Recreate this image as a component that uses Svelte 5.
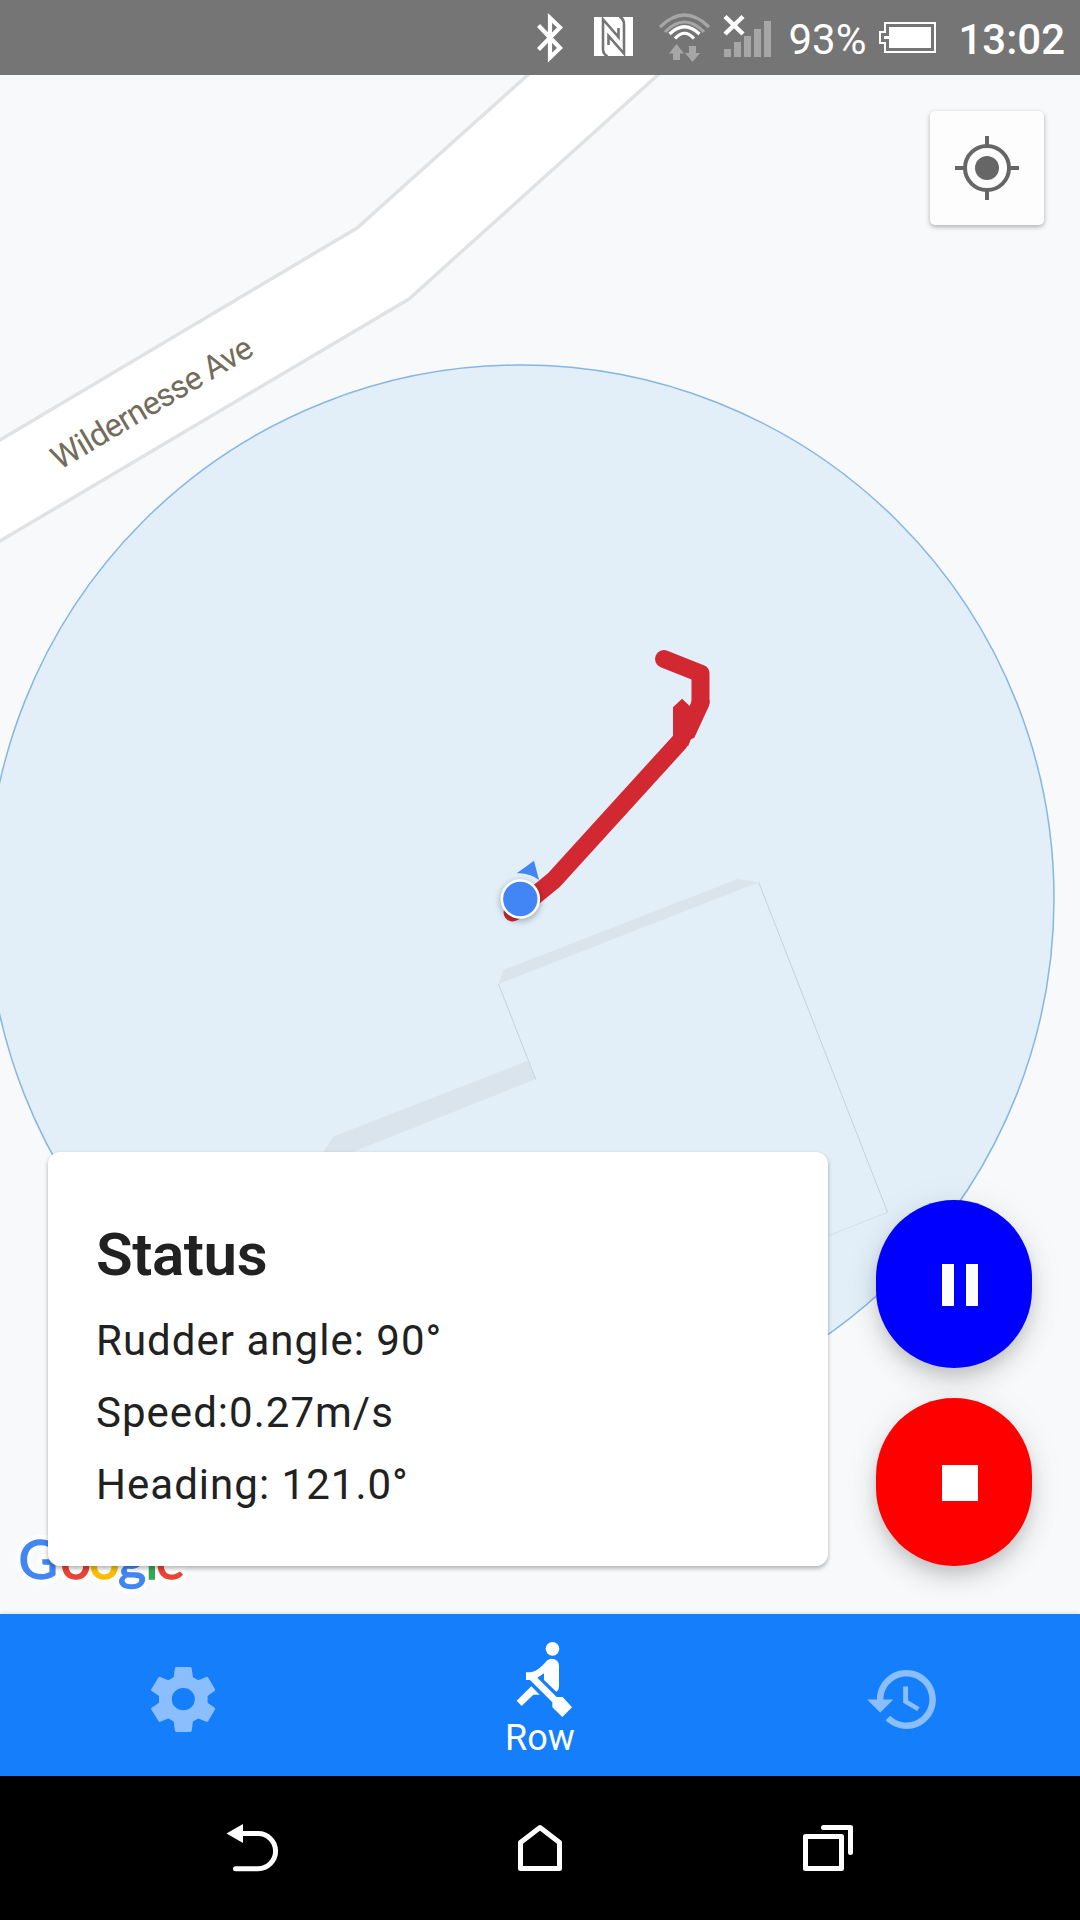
<script>
  const readings = ['Rudder angle: 90°', 'Speed:0.27m/s', 'Heading: 121.0°'];
  const logo = [
    ['G', 18.5, '#4285f4'],
    ['o', 60.5, '#ea4335'],
    ['o', 89, '#fbbc05'],
    ['g', 118, '#4285f4'],
    ['l', 145.5, '#34a853'],
    ['e', 156, '#ea4335']
  ];
</script>

<div class="screen">
  <header class="status-bar">
    <svg class="signals" viewBox="530 0 245 75" aria-hidden="true">
      <path class="line bt" d="M538.500 25.500 L560 48 L550 57.500 V18 L560 27.500 L538.500 49.500" />
      <path class="solid" d="M594 17 H633 V56 H594Z" />
      <path class="nfc" d="M607.500 56.500 Q603 54 603 49 V19.500 L618.500 37 V28 M619.500 16.500 Q624 19 624 24 V53.500 L608.500 36 V45" />
      <path class="line dim arc" d="M660 27 Q684.500 3 709 27 M665 32 Q684.500 12 704 32" />
      <path class="line arc" d="M669.500 34 Q684.500 19.500 699.500 34 M675 38.500 Q684.500 28 694 38.500" />
      <path class="solid dimfill" d="M676.500 44 L684 53.500 H680 V60 H673 V53.500 H669Z M689 46 H696 V53 H700 L692.500 62 L685 53 H689Z" />
      <path class="line cross" d="M725 16.500 L743 34 M743 16.500 L725 34" />
      <path class="solid dimfill" d="M724 49h7v8h-7z M734 42h7v15h-7z M744 36h7v21h-7z M754 29h7v28h-7z M764 21h7v36h-7z" />
    </svg>
    <span class="percent">93%</span>
    <svg class="battery" viewBox="878 20 60 35" aria-hidden="true">
      <path d="M885 23 H935 V52 H885 V43 H880 V32 H885Z" />
      <path class="charge" d="M889 27 H931 V48 H889 V39 H884 V36 H889Z" />
    </svg>
    <span class="time">13:02</span>
  </header>

  <main class="map">
    <svg class="canvas" viewBox="0 75 1080 1539" aria-hidden="true">
      <path class="road" d="M540 64 L357 228 L-10 446 V547 L409 299 L670 64Z" />
      <text class="street" transform="translate(59.500 470.500) rotate(-30.700)" textLength="228">Wildernesse Ave</text>
      <circle class="accuracy" cx="520.500" cy="898.500" r="533.500" />
      <path class="wall" d="M498.500 984 L503.200 970 L737.700 879 L758.700 882.300Z" />
      <path class="wall" d="M527.400 1061 L535.700 1079.300 L345 1155 H321 L334 1136.300Z" />
      <path class="outline" d="M498.500 984 L535.700 1079.300 M758.700 882.300 L887.600 1212.300" />
      <path class="outline faint" d="M887.600 1212.300 L820 1239" />
      <path class="track" d="M664 659 L700.500 673.500 V703" />
      <path class="track" d="M679.500 742 L554 880 L521 907 L512.600 912.500" />
      <path class="spur" d="M673 707.300 L682 698.700 L689.700 706 L692 700 H709.500 V703 L708 708 L694.300 737.700 L691 739.300 L688.300 745.700 L680 748 L673 738Z" />
      <path class="bearing" d="M516.700 873.300 L534 860.700 L539 880 Q529 872.500 516.700 873.300Z" />
      <circle class="me-shadow" cx="520.300" cy="901" r="20" />
      <circle class="me" cx="520.300" cy="899" r="18.500" />
      <text class="logo halo" y="1578.500">{#each logo as [ch, x]}<tspan {x}>{ch}</tspan>{/each}</text>
      <text class="logo" y="1578.500">{#each logo as [ch, x, fill]}<tspan {x} {fill} stroke={fill}>{ch}</tspan>{/each}</text>
    </svg>

    <div class="overlay">
      <button class="locate" aria-label="My location">
        <svg viewBox="0 0 64 64">
          <circle cx="32" cy="32" r="22" />
          <path d="M32 0V9 M32 55V64 M0 32H9 M55 32H64" />
          <circle class="core" cx="32" cy="32" r="12" />
        </svg>
      </button>

      <div class="panel">
        <section class="card">
          <h2>Status</h2>
          {#each readings as line}
            <p>{line}</p>
          {/each}
        </section>
        <div class="actions">
          <button class="fab pause" aria-label="Pause">
            <svg viewBox="0 0 36 42"><path d="M0 0h12v42H0z M24 0h12v42H24z" /></svg>
          </button>
          <button class="fab stop" aria-label="Stop">
            <svg viewBox="0 0 36 42"><path d="M0 3h36v36H0z" /></svg>
          </button>
        </div>
      </div>
    </div>
  </main>

  <nav class="tabs">
    <div class="tab side">
      <svg class="gear" viewBox="90 167 200 200" aria-hidden="true">
        <path fill-rule="evenodd" d="M168 170 H212 L215 173 L219 201 L235 210 L261 199 L264 200 L286 238 L285 241 L263 257 V277 L285 293 L286 296 L264 334 L261 335 L235 325 L219 334 L215 362 L212 365 H168 L165 362 L161 334 L145 325 L119 335 L116 334 L93 296 L94 293 L117 277 V257 L94 241 L93 238 L116 200 L119 199 L145 210 L161 201 L165 173Z M190 233 A34.500 33.500 0 1 0 190 300 A34.500 33.500 0 1 0 190 233Z" />
      </svg>
    </div>
    <div class="tab active">
      <svg class="rower" viewBox="1185 90 180 240" aria-hidden="true">
        <circle cx="1297.500" cy="116.500" r="20.500" />
        <path d="M1218 187 H1233 Q1255 182 1275 158 Q1284 146 1296 146 Q1317 148 1317 168 V230 Q1317 239 1309 245 L1272 210 V190 L1252 203 L1310 261 H1328 L1356 292 L1327 321 L1297 292 V277 L1230 210 H1218Z" />
        <path d="M1234 229 L1259 254 H1240 L1205 288 L1190 272Z" />
      </svg>
      <span>Row</span>
    </div>
    <div class="tab side">
      <svg class="history" viewBox="1 3 21 18" aria-hidden="true">
        <path d="M13 3c-4.970 0-9 4.030-9 9H1l3.890 3.890.07.14L9 12H6c0-3.870 3.130-7 7-7s7 3.130 7 7-3.130 7-7 7c-1.930 0-3.680-.79-4.940-2.060l-1.420 1.420C8.270 19.990 10.510 21 13 21c4.970 0 9-4.030 9-9s-4.030-9-9-9zm-1 5v5l4.280 2.540.72-1.210-3.500-2.080V8H12z" />
      </svg>
    </div>
  </nav>

  <footer class="system-nav">
    <svg viewBox="224 1822 58 52" aria-hidden="true">
      <path class="tip" d="M226.500 1833.500 L243 1824 V1843Z" />
      <path d="M240 1833.500 H258 A17.600 17.600 0 0 1 258 1868.700 H235.500" />
    </svg>
    <svg viewBox="511 1822 58 52" aria-hidden="true">
      <path d="M520.500 1868.500 V1842.500 L540 1827.500 L559.500 1842.500 V1868.500Z" />
    </svg>
    <svg viewBox="799 1822 58 52" aria-hidden="true">
      <path d="M805.500 1836.500 H841.500 V1868.500 H805.500Z M823.500 1827.500 H850.500 V1852.500" />
    </svg>
  </footer>
</div>

<style>
  :global(body) {
    margin: 0;
  }
  .screen {
    width: 1080px;
    height: 1920px;
    display: flex;
    flex-direction: column;
    overflow: hidden;
    font-family: Roboto, 'Liberation Sans', sans-serif;
  }
  svg {
    display: block;
    flex: none;
  }
  button {
    border: 0;
    padding: 0;
    display: flex;
    align-items: center;
    justify-content: center;
  }

  .status-bar {
    height: 75px;
    flex: none;
    box-sizing: border-box;
    padding-right: 15px;
    background: #757575;
    color: #fff;
    display: flex;
    align-items: center;
    justify-content: flex-end;
    font-size: 42px;
    line-height: 75px;
  }
  .signals {
    width: 245px;
    height: 75px;
  }
  .solid {
    fill: #fff;
  }
  .line {
    fill: none;
    stroke: #fff;
    stroke-width: 4;
  }
  .nfc {
    fill: none;
    stroke: #757575;
    stroke-width: 2.6;
  }
  .bt {
    stroke-width: 4.2;
    stroke-miterlimit: 10;
  }
  .arc {
    stroke-width: 3.2;
  }
  .cross {
    stroke-width: 4.5;
  }
  .dim {
    stroke: #a6a6a6;
  }
  .dimfill {
    fill: #a6a6a6;
  }
  .percent {
    margin: 3px 0 0 13px;
    width: 78px;
    white-space: nowrap;
  }
  .battery {
    width: 60px;
    height: 35px;
    margin-left: 12px;
    fill: none;
    stroke: #fff;
    stroke-width: 2;
  }
  .battery .charge {
    fill: #fff;
    stroke: none;
  }
  .time {
    margin: 3px 0 0 20px;
    font-weight: 500;
    white-space: nowrap;
  }

  .map {
    height: 1539px;
    flex: none;
    position: relative;
    background: #f8f9fb;
  }
  .canvas {
    position: absolute;
    inset: 0;
    width: 1080px;
    height: 1539px;
  }
  .road {
    fill: #fff;
    stroke: #e1e2e4;
    stroke-width: 3.5;
  }
  .street {
    font-size: 32.5px;
    fill: #736c5b;
  }
  .accuracy {
    fill: #e2eff8;
    stroke: #86b6e3;
    stroke-width: 1.5;
  }
  .wall {
    fill: #dae4ec;
  }
  .outline {
    fill: none;
    stroke: #c5d2dc;
    stroke-width: 1;
  }
  .faint {
    stroke: #d6e1e9;
  }
  .track {
    fill: none;
    stroke: #d22831;
    stroke-width: 18;
    stroke-linecap: round;
    stroke-linejoin: round;
  }
  .spur {
    fill: #d22831;
  }
  .bearing {
    fill: #4286f5;
  }
  .me-shadow {
    fill: rgba(0, 0, 0, 0.3);
    filter: blur(3px);
  }
  .me {
    fill: #4286f5;
    stroke: #fff;
    stroke-width: 2.6;
  }
  .logo {
    font: 400 54px Lato, sans-serif;
    stroke-width: 1.4;
  }
  .halo {
    fill: #fdfefe;
    stroke: #fdfefe;
    stroke-width: 11;
    stroke-linejoin: round;
  }

  .overlay {
    position: relative;
    height: 100%;
    box-sizing: border-box;
    padding: 36px 36px 48px 48px;
    display: flex;
    flex-direction: column;
    justify-content: space-between;
  }
  .locate {
    align-self: flex-end;
    width: 114px;
    height: 114px;
    border-radius: 5px;
    background: #fdfdfd;
    box-shadow: 0 2px 5px rgba(0, 0, 0, 0.3);
  }
  .locate svg {
    width: 64px;
    height: 64px;
    fill: none;
    stroke: #666;
    stroke-width: 4;
  }
  .locate .core {
    fill: #666;
    stroke: none;
  }
  .panel {
    display: flex;
    align-items: flex-end;
    justify-content: space-between;
    padding-right: 12px;
  }
  .card {
    width: 780px;
    height: 414px;
    box-sizing: border-box;
    padding: 73px 48px 0;
    border-radius: 12px;
    background: #fff;
    color: #212121;
    box-shadow: 0 3px 4px rgba(0, 0, 0, 0.2), 0 1px 4px rgba(0, 0, 0, 0.12);
  }
  h2 {
    margin: 0 0 20px;
    font-size: 60px;
    font-weight: 600;
    line-height: 60px;
    letter-spacing: -0.4px;
  }
  p {
    margin: 0;
    font-size: 42px;
    line-height: 72px;
    letter-spacing: 1.02px;
  }
  .actions {
    display: flex;
    flex-direction: column;
    gap: 30px;
  }
  .fab {
    width: 156px;
    height: 168px;
    box-sizing: border-box;
    padding: 2px 0 0 12px;
    border-radius: 78px;
    box-shadow: 0 9px 15px -3px rgba(0, 0, 0, 0.12), 0 14px 28px rgba(0, 0, 0, 0.1), 0 3px 40px rgba(0, 0, 0, 0.06);
  }
  .fab svg {
    width: 36px;
    height: 42px;
    fill: #fff;
  }
  .pause {
    background: #00f;
  }
  .stop {
    background: #f00;
  }

  .tabs {
    position: relative;
    height: 162px;
    flex: none;
    box-sizing: border-box;
    background: #157efb;
    box-shadow: 0 -1px 4px rgba(0, 0, 0, 0.1);
    display: grid;
    grid-template-columns: 366px 348px 366px;
    color: #fff;
    fill: #fff;
  }
  .tab {
    display: flex;
    flex-direction: column;
    align-items: center;
  }
  .side {
    justify-content: center;
    padding-top: 8px;
    fill: #8abefd;
  }
  .gear {
    width: 66.600px;
    height: 66.600px;
  }
  .history {
    width: 69px;
    height: 59px;
    margin-left: 8px;
  }
  .active {
    padding-top: 26px;
    font-size: 36px;
    line-height: 36px;
  }
  .rower {
    width: 60px;
    height: 80px;
    margin-left: 10px;
  }

  .system-nav {
    height: 144px;
    flex: none;
    background: #000;
    display: flex;
    align-items: center;
    justify-content: center;
    gap: 229.500px;
  }
  .system-nav svg {
    width: 58px;
    height: 52px;
    fill: none;
    stroke: #fff;
    stroke-width: 5;
    stroke-linecap: round;
    stroke-linejoin: round;
  }
  .system-nav .tip {
    fill: #fff;
    stroke: none;
  }
</style>
